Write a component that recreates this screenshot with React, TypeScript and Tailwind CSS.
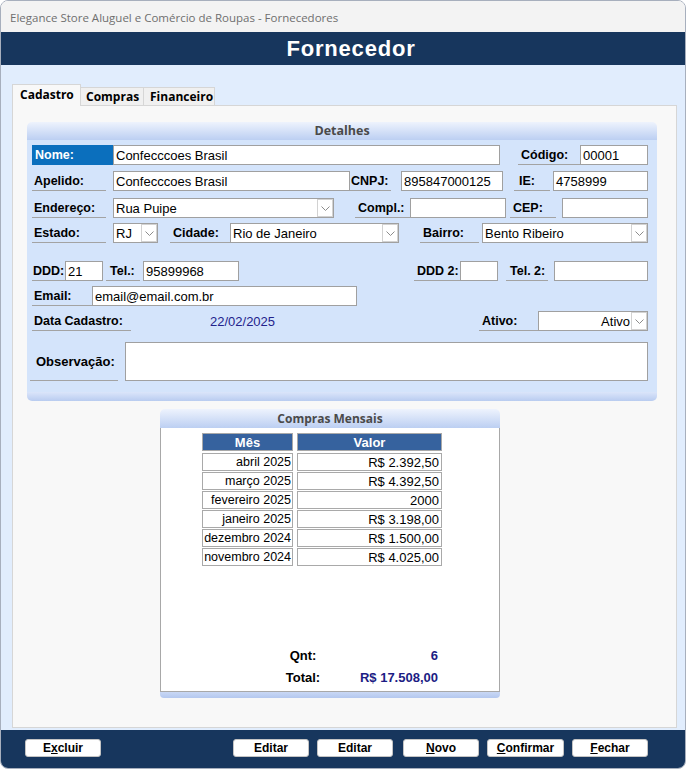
import React from "react";

type P = { className?: string; children?: React.ReactNode };

function Label({ className = "", children }: P) {
  return (
    <div
      className={`flex h-full shrink-0 items-center whitespace-nowrap border-b border-[#a3a3a3] pt-[1px] text-[12.5px] font-bold leading-none text-black ${className}`}
    >
      {children}
    </div>
  );
}

function Field({ className = "", children }: P) {
  return (
    <div
      className={`flex h-full shrink-0 items-center overflow-hidden whitespace-nowrap border border-[#a0a0a0] bg-white pl-[2px] text-[13px] leading-none text-black ${className}`}
    >
      {children}
    </div>
  );
}

function Chevron() {
  return (
    <div className="flex h-full w-[16px] shrink-0 items-center justify-center border border-[#d2d2d2] bg-white">
      <svg width="9" height="5" viewBox="0 0 9 5">
        <path d="M0.5 0.5L4.5 4.5L8.5 0.5" fill="none" stroke="#8c8c8c" strokeWidth="1" />
      </svg>
    </div>
  );
}

function Select({ className = "", children, right = false }: P & { right?: boolean }) {
  return (
    <div
      className={`flex h-full shrink-0 items-center border border-[#a0a0a0] bg-white text-[13px] leading-none text-black ${className}`}
    >
      <span className={right ? "flex-1 whitespace-nowrap pr-[1px] text-right" : "flex-1 whitespace-nowrap pl-[2px]"}>
        {children}
      </span>
      <Chevron />
    </div>
  );
}

function Btn({ className = "", children }: P) {
  return (
    <div
      className={`flex h-[18px] w-[76px] shrink-0 items-center justify-center rounded-[3px] border border-[#c4c4c4] bg-white text-[12px] font-bold leading-none text-black ${className}`}
    >
      {children}
    </div>
  );
}

const rows: [string, string][] = [
  ["abril 2025", "R$ 2.392,50"],
  ["março 2025", "R$ 4.392,50"],
  ["fevereiro 2025", "2000"],
  ["janeiro 2025", "R$ 3.198,00"],
  ["dezembro 2024", "R$ 1.500,00"],
  ["novembro 2024", "R$ 4.025,00"],
];

export default function App() {
  return (
    <div className="h-[770px] w-[688px] bg-white font-['Liberation_Sans',Arial,sans-serif]">
      <div className="flex h-[769px] w-[686px] flex-col overflow-hidden rounded-[8px] border border-[#a7afbd]">
        {/* title bar */}
        <div className="flex h-[31px] shrink-0 items-center bg-[#f3f3f3] pl-[9px] pt-[2px] font-['Open_Sans',sans-serif] text-[11.5px] text-[#6f6f6f]">
          Elegance Store Aluguel e Comércio de Roupas - Fornecedores
        </div>
        {/* header */}
        <div className="flex h-[33px] shrink-0 items-center justify-center bg-[#17365d] pl-[16px] text-[22px] font-bold tracking-[0.8px] text-white">
          Fornecedor
        </div>
        {/* body */}
        <div className="flex h-[665px] shrink-0 flex-col bg-[#e1edfd] pl-[11px] pt-[19px]">
          {/* tabs */}
          <div className="flex h-[21px] items-end font-['Open_Sans',sans-serif] text-[12px] font-bold text-black">
            <div className="relative z-10 -mb-px flex h-[22px] w-[69px] items-center border border-b-0 border-[#d6d6d6] bg-[#f8f8f8] pb-[2px] pl-[7px]">
              Cadastro
            </div>
            <div className="flex h-[18px] w-[63px] items-center border-r border-t border-[#d6d6d6] bg-[#f0f0f0] pl-[5px]">
              Compras
            </div>
            <div className="flex h-[18px] w-[71px] items-center border-r border-t border-[#d6d6d6] bg-[#f0f0f0] pl-[6px]">
              Financeiro
            </div>
          </div>
          {/* panel */}
          <div className="flex h-[623px] w-[665px] flex-col border border-[#d6d6d6] bg-[#f8f8f8] pl-[14px] pt-[16px]">
            {/* Detalhes */}
            <div className="flex w-[630px] flex-col">
              <div className="flex h-[18px] items-center justify-center rounded-t-[5px] bg-gradient-to-b from-[#eef3fd] to-[#bccff2] font-['Open_Sans',sans-serif] text-[12.5px] font-bold text-[#4a4a4a]">
                Detalhes
              </div>
              <div className="flex flex-col bg-[#d4e4fb] pb-[11px]">
                {/* row 1 */}
                <div className="mt-[5px] flex h-[20px]">
                  <div className="ml-[5px] flex h-full w-[81px] items-center bg-[#0b6fbd] pl-[3px] pt-[1px] text-[12.5px] font-bold leading-none text-white">
                    Nome:
                  </div>
                  <Field className="w-[387px]">Confecccoes Brasil</Field>
                  <Label className="ml-[18px] w-[62px] pl-[3px]">Código:</Label>
                  <Field className="w-[68px]">00001</Field>
                </div>
                {/* row 2 */}
                <div className="mt-[6px] flex h-[20px]">
                  <Label className="ml-[5px] w-[74px] pl-[2px]">Apelido:</Label>
                  <Field className="ml-[7px] w-[237px]">Confecccoes Brasil</Field>
                  <Label className="w-[41px] pl-[1px]">CNPJ:</Label>
                  <Field className="ml-[10px] w-[102px]">895847000125</Field>
                  <Label className="ml-[11px] w-[36px] pl-[5px]">IE:</Label>
                  <Field className="ml-[3px] w-[95px]">4758999</Field>
                </div>
                {/* row 3 */}
                <div className="mt-[7px] flex h-[20px]">
                  <Label className="ml-[5px] w-[74px] pl-[2px]">Endereço:</Label>
                  <Select className="ml-[7px] w-[221px]">Rua Puipe</Select>
                  <Label className="ml-[21px] w-[55px] pl-[3px]">Compl.:</Label>
                  <Field className="w-[96px]"></Field>
                  <Label className="ml-[4px] w-[46px] pl-[3px]">CEP:</Label>
                  <Field className="ml-[6px] w-[86px]"></Field>
                </div>
                {/* row 4 */}
                <div className="mt-[5px] flex h-[20px]">
                  <Label className="ml-[5px] w-[74px] pl-[2px]">Estado:</Label>
                  <Select className="ml-[7px] w-[45px]">RJ</Select>
                  <Label className="ml-[12px] w-[60px] pl-[3px]">Cidade:</Label>
                  <Select className="w-[169px]">Rio de Janeiro</Select>
                  <Label className="ml-[21px] w-[59px] pl-[3px]">Bairro:</Label>
                  <Select className="ml-[3px] w-[166px]">Bento Ribeiro</Select>
                </div>
                {/* row 5 */}
                <div className="mt-[18px] flex h-[20px]">
                  <Label className="ml-[5px] w-[33px] pl-[1px]">DDD:</Label>
                  <Field className="w-[38px]">21</Field>
                  <Label className="ml-[3px] w-[34px] pl-[4px]">Tel.:</Label>
                  <Field className="ml-[3px] w-[96px]">95899968</Field>
                  <Label className="ml-[175px] w-[46px] pl-[3px]">DDD 2:</Label>
                  <Field className="w-[38px]"></Field>
                  <Label className="ml-[8px] w-[42px] pl-[4px]">Tel. 2:</Label>
                  <Field className="ml-[6px] w-[94px]"></Field>
                </div>
                {/* row 6 */}
                <div className="mt-[5px] flex h-[20px]">
                  <Label className="ml-[5px] w-[60px] pl-[2px]">Email:</Label>
                  <Field className="w-[265px]">email@email.com.br</Field>
                </div>
                {/* row 7 */}
                <div className="mt-[5px] flex h-[20px]">
                  <Label className="ml-[5px] w-[99px] pl-[2px]">Data Cadastro:</Label>
                  <div className="ml-[79px] flex h-full w-[269px] shrink-0 items-center text-[13px] leading-none text-[#23238c]">
                    22/02/2025
                  </div>
                  <Label className="w-[59px] pl-[3px]">Ativo:</Label>
                  <Select className="w-[110px]" right>
                    Ativo
                  </Select>
                </div>
                {/* row 8 */}
                <div className="mt-[11px] flex h-[39px]">
                  <Label className="ml-[3px] h-[38px] w-[88px] pl-[6px] text-[13px]">Observação:</Label>
                  <div className="ml-[7px] h-[39px] w-[523px] shrink-0 border border-[#a0a0a0] bg-white" />
                </div>
              </div>
              <div className="h-[9px] rounded-b-[5px] bg-gradient-to-b from-[#dbe5fa] to-[#b9ccf0]" />
            </div>

            {/* Compras Mensais */}
            <div className="ml-[133px] mt-[8px] flex w-[340px] flex-col">
              <div className="flex h-[19px] items-center justify-center rounded-t-[5px] bg-gradient-to-b from-[#eef3fd] to-[#bccff2] font-['Open_Sans',sans-serif] text-[12px] font-bold text-[#4a4a4a]">
                Compras Mensais
              </div>
              <div className="flex h-[264px] flex-col border border-t-0 border-[#a8a8a8] bg-white">
                <div className="ml-[41px] mt-[5px] flex flex-col gap-[1px]">
                  <div className="mb-[1px] flex h-[18px] gap-[4px]">
                    <div className="flex h-full w-[91px] items-center justify-center border border-[#a9a9a9] bg-[#36629e] text-[13px] font-bold leading-none text-white">
                      Mês
                    </div>
                    <div className="flex h-full w-[145px] items-center justify-center border border-[#a9a9a9] bg-[#36629e] text-[13px] font-bold leading-none text-white">
                      Valor
                    </div>
                  </div>
                  {rows.map(([m, v]) => (
                    <div key={m} className="flex h-[18px] gap-[4px]">
                      <div className="flex h-full w-[91px] items-center justify-end whitespace-nowrap border border-[#a9a9a9] bg-white pr-[1px] text-[12.5px] leading-none text-black">
                        {m}
                      </div>
                      <div className="flex h-full w-[145px] items-center justify-end whitespace-nowrap border border-[#a9a9a9] bg-white pr-[2px] text-[13px] leading-none text-black">
                        {v}
                      </div>
                    </div>
                  ))}
                </div>
                <div className="ml-[112px] mt-[80px] flex h-[18px] items-center text-[13px] font-bold leading-none">
                  <div className="w-[60px] text-center text-black">Qnt:</div>
                  <div className="w-[105px] text-right text-[#1c1c84]">6</div>
                </div>
                <div className="ml-[112px] mt-[4px] flex h-[18px] items-center text-[13px] font-bold leading-none">
                  <div className="w-[60px] text-center text-black">Total:</div>
                  <div className="w-[105px] text-right text-[#1c1c84]">R$ 17.508,00</div>
                </div>
              </div>
              <div className="h-[6px] rounded-b-[4px] bg-gradient-to-b from-[#c9d8f5] to-[#b4c8ef]" />
            </div>
          </div>
        </div>
        {/* footer */}
        <div className="flex h-[38px] shrink-0 items-start bg-[#17365d] pt-[9px]">
          <Btn className="ml-[24px]">
            <span>
              E<u>x</u>cluir
            </span>
          </Btn>
          <Btn className="ml-[132px]">Editar</Btn>
          <Btn className="ml-[8px]">Editar</Btn>
          <Btn className="ml-[10px]">
            <span>
              <u>N</u>ovo
            </span>
          </Btn>
          <Btn className="ml-[8px] w-[77px]">
            <span>
              <u>C</u>onfirmar
            </span>
          </Btn>
          <Btn className="ml-[8px]">
            <span>
              <u>F</u>echar
            </span>
          </Btn>
        </div>
      </div>
    </div>
  );
}
